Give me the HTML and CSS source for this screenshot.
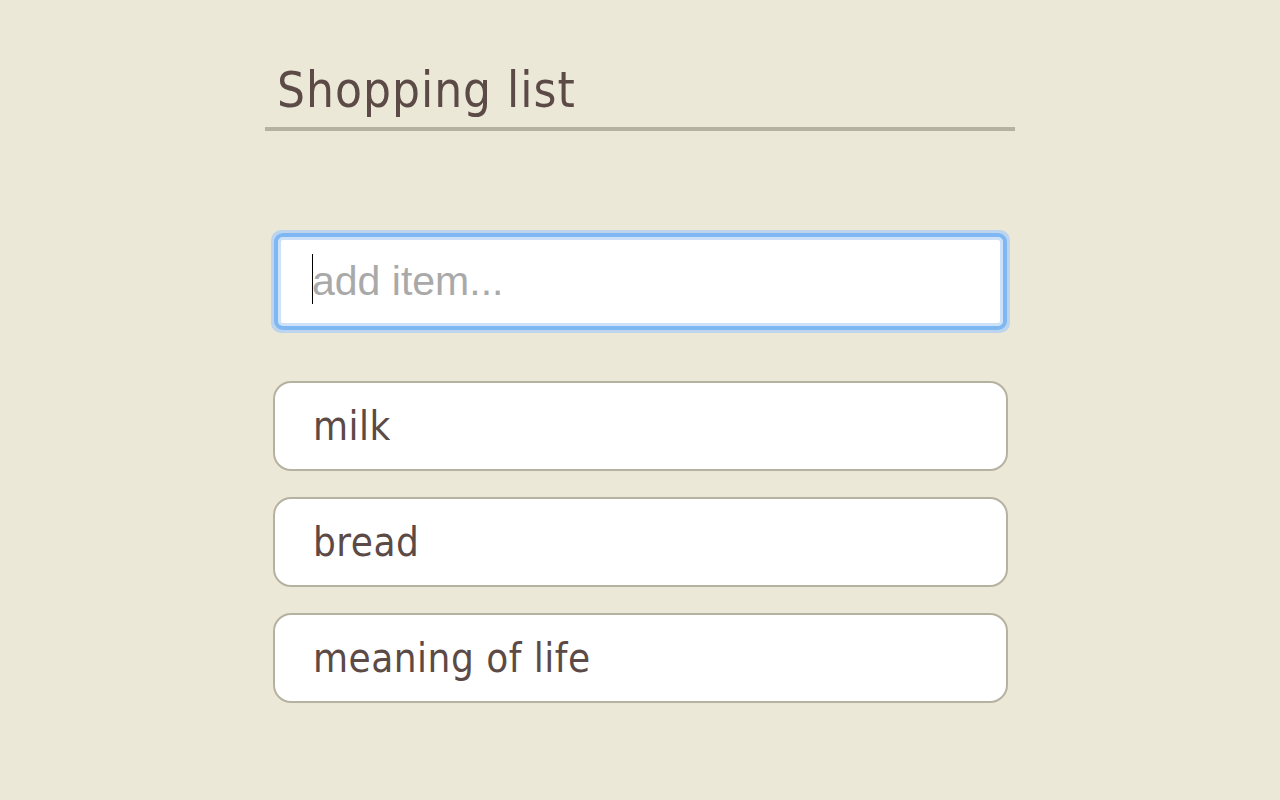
FILE: index.html
```html
<!DOCTYPE html>
<html>
<head>
<meta charset="utf-8">
<title>Shopping list</title>
<link rel="stylesheet" href="styles.css">
</head>
<body>
<main class="app">
  <h1 class="title">Shopping list</h1>
  <div class="add">
    <div class="add-ring">
      <div class="add-field"><span class="caret"></span><span class="placeholder">add item...</span></div>
    </div>
  </div>
  <ul class="items">
    <li class="item">milk</li>
    <li class="item">bread</li>
    <li class="item">meaning of life</li>
  </ul>
</main>
</body>
</html>
```
FILE: styles.css
```css
html, body {
  margin: 0;
  padding: 0;
  background: #ebe8d8;
}
body {
  font-family: "DejaVu Sans", Verdana, sans-serif;
  font-stretch: condensed;
  color: #5c4a47;
}
.app {
  width: 750px;
  margin: 0 auto;
  padding-top: 61px;
}
.title {
  margin: 0;
  padding: 0 0 6px 12px;
  font-size: 49px;
  font-weight: normal;
  line-height: 60px;
  letter-spacing: 1px;
  border-bottom: 4px solid #b5b2a2;
}
.add {
  margin-top: 99px;
  padding: 0 5px 0 6px;
}
.add-ring {
  border-radius: 10px;
  padding: 3px;
  background: #bcd4ee;
}
.add-field {
  position: relative;
  height: 89px;
  background: #fff;
  border: 4px solid #7fb7f2;
  border-radius: 9px;
  box-shadow: inset 0 0 0 3px #cde2f8;
  display: flex;
  align-items: center;
  padding-left: 34px;
}
.placeholder {
  font-family: "Liberation Sans", Arial, sans-serif;
  font-size: 41px;
  color: #a9a9a9;
}
.caret {
  position: absolute;
  left: 34px;
  top: 17px;
  width: 1px;
  height: 50px;
  background: #000;
}
.items {
  list-style: none;
  margin: 48px 0 0 0;
  padding: 0 7px 0 8px;
  display: flex;
  flex-direction: column;
  gap: 26px;
}
.item {
  height: 86px;
  background: #fff;
  border: 2px solid #b5b2a2;
  border-radius: 18px;
  display: flex;
  align-items: center;
  padding-left: 38px;
  font-size: 40px;
  letter-spacing: 0.5px;
}
```
